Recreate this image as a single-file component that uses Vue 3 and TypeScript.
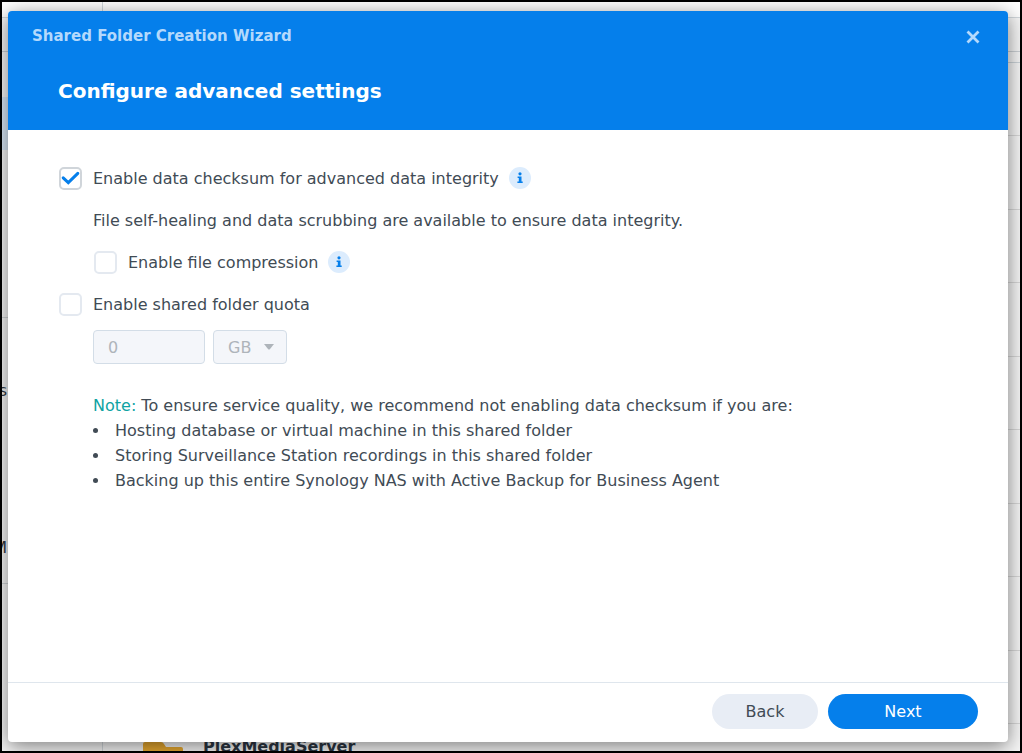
<script setup lang="ts">
import { ref } from 'vue'

const checksum = ref(true)
const compression = ref(false)
const quotaEnabled = ref(false)
const quota = ref('0')
const unit = ref('GB')

const notes: string[] = [
  'Hosting database or virtual machine in this shared folder',
  'Storing Surveillance Station recordings in this shared folder',
  'Backing up this entire Synology NAS with Active Backup for Business Agent',
]
</script>

<template>
  <div class="desktop">
    <div class="backdrop" aria-hidden="true">
      <div class="strip"></div>
      <div class="panes">
        <div class="side">
          <div class="side-toolbar"></div>
          <div class="side-group">
            <div class="selected"></div>
          </div>
          <div class="side-group second">
            <span class="cut">s</span>
            <span class="cut">M</span>
          </div>
        </div>
        <div class="list">
          <div class="list-toolbar"></div>
          <div class="list-gap"></div>
          <div v-for="n in 9" :key="n" class="row"></div>
          <div class="row last">
            <svg class="folder" width="40" height="32" viewBox="0 0 40 32">
              <path d="M0 2Q0 0 2 0H18Q20 0 21 2L23 5H38Q40 5 40 7V32H0Z" fill="#e6a830" />
            </svg>
            <b>PlexMediaServer</b>
          </div>
        </div>
      </div>
    </div>

    <section class="dialog" role="dialog" aria-labelledby="wizard-title">
      <header class="head">
        <div class="titlebar">
          <span id="wizard-title">Shared Folder Creation Wizard</span>
          <button class="close" type="button" aria-label="Close">
            <svg width="14" height="14" viewBox="0 0 14 14">
              <path d="M1.5 1.5L12.5 12.5M12.5 1.5L1.5 12.5" stroke="#b4d9fc" stroke-width="2.8" fill="none" />
            </svg>
          </button>
        </div>
        <h1>Configure advanced settings</h1>
      </header>

      <main class="body">
        <div class="line">
          <label class="option">
            <span class="box">
              <input v-model="checksum" type="checkbox" />
              <svg v-if="checksum" width="23" height="23" viewBox="0 0 23 23">
                <path d="M4.2 10.8L9.3 15.6L18.8 6.4" stroke="#057feb" stroke-width="3" stroke-linecap="round" fill="none" />
              </svg>
            </span>
            Enable data checksum for advanced data integrity
          </label>
          <button class="info" type="button" aria-label="About data checksum">
            <svg width="22" height="22" viewBox="0 0 22 22">
              <circle cx="11" cy="6.8" r="1.6" fill="#057feb" />
              <path d="M8.6 9.4h3.9v5h1.2V16H8.4v-1.6h1.4V11H8.6z" fill="#057feb" />
            </svg>
          </button>
        </div>
        <p class="line indent">File self-healing and data scrubbing are available to ensure data integrity.</p>
        <div class="line nested">
          <label class="option">
            <span class="box">
              <input v-model="compression" type="checkbox" />
              <svg v-if="compression" width="23" height="23" viewBox="0 0 23 23">
                <path d="M4.2 10.8L9.3 15.6L18.8 6.4" stroke="#057feb" stroke-width="3" stroke-linecap="round" fill="none" />
              </svg>
            </span>
            Enable file compression
          </label>
          <button class="info" type="button" aria-label="About file compression">
            <svg width="22" height="22" viewBox="0 0 22 22">
              <circle cx="11" cy="6.8" r="1.6" fill="#057feb" />
              <path d="M8.6 9.4h3.9v5h1.2V16H8.4v-1.6h1.4V11H8.6z" fill="#057feb" />
            </svg>
          </button>
        </div>
        <div class="line">
          <label class="option">
            <span class="box">
              <input v-model="quotaEnabled" type="checkbox" />
              <svg v-if="quotaEnabled" width="23" height="23" viewBox="0 0 23 23">
                <path d="M4.2 10.8L9.3 15.6L18.8 6.4" stroke="#057feb" stroke-width="3" stroke-linecap="round" fill="none" />
              </svg>
            </span>
            Enable shared folder quota
          </label>
        </div>
        <div class="fields">
          <input v-model="quota" class="field amount" type="text" aria-label="Quota size" :disabled="!quotaEnabled" />
          <span class="picker">
            <select v-model="unit" class="field" aria-label="Quota unit" :disabled="!quotaEnabled">
              <option>MB</option>
              <option>GB</option>
              <option>TB</option>
            </select>
            <svg width="10" height="6" viewBox="0 0 10 6">
              <path d="M0 0H10L6 5Q5 6 4 5Z" fill="#aeb4ba" />
            </svg>
          </span>
        </div>
        <div class="note">
          <p><span class="tag">Note:</span> To ensure service quality, we recommend not enabling data checksum if you are:</p>
          <ul>
            <li v-for="note in notes" :key="note">{{ note }}</li>
          </ul>
        </div>
      </main>

      <footer class="foot">
        <button class="btn" type="button">Back</button>
        <button class="btn primary" type="button">Next</button>
      </footer>
    </section>
  </div>
</template>

<style>
body {
  margin: 0;
}
</style>

<style scoped>
.desktop {
  position: relative;
  display: flex;
  box-sizing: border-box;
  min-height: 100vh;
  padding: 9px 12px 9px 6px;
  border: 2px solid #000;
  background: #fff;
  overflow: hidden;
  font-family: Verdana, 'DejaVu Sans', sans-serif;
  font-size: 16px;
  line-height: 25px;
  color: #414b55;
}

.backdrop {
  position: absolute;
  inset: 0;
  display: flex;
  flex-direction: column;
  overflow: hidden;
  background: #f6f6f6;
}

.strip {
  flex: none;
  height: 15px;
  border-bottom: 1px solid #d2d8dc;
  background: #fff;
}

.panes {
  flex: 1;
  display: flex;
}

.side {
  width: 100px;
  margin-top: -16px;
  border-right: 1px solid #d2d8dc;
}

.side-toolbar {
  height: 49px;
  border-bottom: 1px solid #ccd1d5;
}

.side-group {
  box-sizing: border-box;
  height: 266px;
  padding-top: 45px;
  border-bottom: 1px solid #d0d4d7;
}

.selected {
  height: 53px;
  background: #d9e8f7;
}

.second {
  display: flex;
  flex-direction: column;
  gap: 132px;
  padding-top: 60px;
}

.cut {
  width: 5px;
  display: flex;
  justify-content: flex-end;
  color: #303a44;
}

.list {
  flex: 1;
}

.list-toolbar {
  height: 33px;
  border-bottom: 1px solid #ccd1d5;
}

.list-gap {
  height: 10px;
  border-bottom: 1px solid #ccd4d9;
}

.row {
  box-sizing: border-box;
  height: 73px;
  border-bottom: 1px solid #d8d8d8;
}

.row:nth-child(even) {
  height: 74px;
}

.last {
  display: flex;
  gap: 20px;
  padding: 10px 40px;
}

.last b {
  color: #2c3642;
}

.folder {
  margin-top: 8px;
}

.dialog {
  position: relative;
  flex: 1;
  display: flex;
  flex-direction: column;
  border-radius: 4px;
  background: #fff;
  box-shadow: 0 4px 20px rgba(0, 0, 0, 0.5);
  overflow: hidden;
}

.head {
  box-sizing: border-box;
  height: 119px;
  padding: 13px 28px 0 24px;
  background: #057feb;
}

.titlebar {
  display: flex;
  justify-content: space-between;
  align-items: center;
  font-size: 15px;
  font-weight: 700;
  color: #b4d9fc;
}

.close,
.info {
  display: grid;
  place-items: center;
  padding: 0;
  border: 0;
  background: none;
}

h1 {
  margin: 30px 0 0 26px;
  font-size: 20px;
  line-height: 25px;
  color: #fff;
}

.body {
  flex: 1;
  padding: 27px 51px 0;
}

p {
  margin: 0;
}

.line {
  display: flex;
  align-items: center;
  gap: 10px;
  min-height: 42px;
}

.indent {
  padding-left: 34px;
}

.nested {
  padding-left: 35px;
}

.option {
  display: flex;
  align-items: center;
  gap: 11px;
}

.box {
  display: grid;
}

.box > * {
  grid-area: 1 / 1;
}

.box svg {
  pointer-events: none;
}

.box input {
  appearance: none;
  box-sizing: border-box;
  width: 23px;
  height: 23px;
  margin: 0;
  border: 2px solid #e4e9f0;
  border-radius: 5px;
  background: #fff;
}

.box input:checked {
  border-color: #d0d5da;
}

.info {
  width: 22px;
  height: 22px;
  border-radius: 50%;
  background: #dcecfd;
}

.fields {
  display: flex;
  gap: 8px;
  margin: 5px 0 0 34px;
}

.field {
  appearance: none;
  box-sizing: border-box;
  height: 34px;
  padding: 0 14px;
  border: 1px solid #d3dde7;
  border-radius: 4px;
  background: #f4f6fa;
  font: inherit;
  color: #aeb4ba;
  opacity: 1;
}

.amount {
  width: 112px;
}

.picker {
  display: grid;
  align-items: center;
}

.picker > * {
  grid-area: 1 / 1;
}

.picker select {
  width: 74px;
  padding-right: 20px;
}

.picker svg {
  justify-self: end;
  margin-right: 13px;
  pointer-events: none;
}

.note {
  margin: 29px 0 0 34px;
}

.tag {
  color: #0fa3a3;
}

ul {
  margin: 0;
  padding: 0;
  list-style: none;
}

li {
  display: flex;
  align-items: center;
  gap: 17px;
}

li::before {
  content: '';
  width: 5px;
  height: 5px;
  border-radius: 50%;
  background: #414b55;
}

.foot {
  display: flex;
  justify-content: flex-end;
  gap: 10px;
  padding: 11px 30px 13px;
  border-top: 1px solid #dfe6ed;
}

.btn {
  min-width: 106px;
  height: 35px;
  padding: 0;
  border: 0;
  border-radius: 18px;
  background: #e8edf5;
  font: inherit;
  color: #414b55;
}

.primary {
  min-width: 150px;
  background: #057feb;
  color: #fff;
}
</style>
